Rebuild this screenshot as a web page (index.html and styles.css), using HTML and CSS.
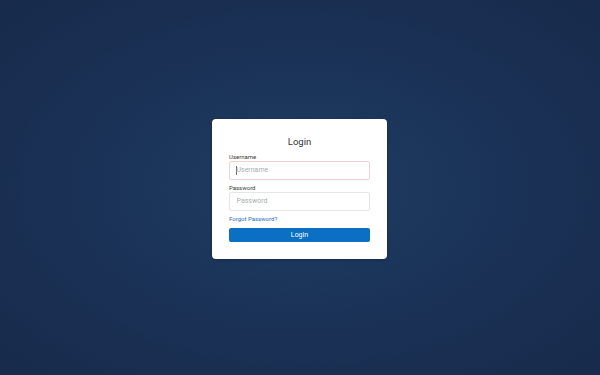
FILE: index.html
```html
<!DOCTYPE html>
<html lang="en">
<head>
<meta charset="utf-8">
<title>Login</title>
<link rel="stylesheet" href="styles.css">
</head>
<body>
<main class="page">
  <form class="card">
    <h1 class="title">Login</h1>
    <div class="group">
      <label class="label" for="u">Username</label>
      <div class="field field-focus">
        <input id="u" class="input input-focus" type="text" placeholder="Username">
      </div>
    </div>
    <div class="group">
      <label class="label" for="p">Password</label>
      <div class="field">
        <input id="p" class="input" type="password" placeholder="Password">
      </div>
    </div>
    <a class="forgot" href="#">Forgot Password?</a>
    <button class="btn" type="button">Login</button>
  </form>
</main>
</body>
</html>
```
FILE: styles.css
```css
* { box-sizing: border-box; }
html, body { margin: 0; padding: 0; height: 100%; }
body {
  font-family: Roboto, "Liberation Sans", Arial, sans-serif;
  background: radial-gradient(ellipse at 50% 50%, #1f3b63 0%, #1b3358 45%, #172a4b 100%);
}
.page {
  height: 100%;
  display: flex;
  align-items: center;
  justify-content: center;
  padding-top: 2px;
}
.card {
  width: 175px;
  height: 140px;
  margin-left: -1px;
  background: #ffffff;
  border-radius: 4px;
  padding: 17px;
  display: flex;
  flex-direction: column;
  box-shadow: 0 1px 3px rgba(0,0,0,0.2);
}
.title {
  margin: 0 0 6px;
  font-size: 9.5px;
  line-height: 11px;
  font-weight: 400;
  color: #333333;
  text-align: center;
}
.group { margin-bottom: 4px; }
.label {
  display: block;
  font-size: 6px;
  line-height: 7px;
  color: #3a3a3a;
  margin-bottom: 1.5px;
}
.field { position: relative; }
.input {
  display: block;
  width: 100%;
  height: 18.5px;
  margin: 0;
  padding: 0 6.5px;
  border: 1px solid #e3e5e8;
  border-radius: 2px;
  font-family: inherit;
  font-size: 7px;
  color: #333;
  background: #fff;
  outline: none;
}
.input::placeholder { color: #a9adb2; }
.input-focus { border-color: #f3d2d4; }
.field-focus::before {
  content: "";
  position: absolute;
  left: 7px;
  top: 5px;
  width: 0.6px;
  height: 8.5px;
  background: #777;
}
.forgot {
  font-size: 6px;
  line-height: 7px;
  color: #1d6fbf;
  text-decoration: none;
  align-self: flex-start;
}
.btn {
  margin-top: 6px;
  height: 14px;
  width: 100%;
  padding: 0;
  border: none;
  border-radius: 2px;
  background: #0b70c4;
  color: #ffffff;
  font-family: inherit;
  font-size: 7px;
  line-height: 14px;
}
```
